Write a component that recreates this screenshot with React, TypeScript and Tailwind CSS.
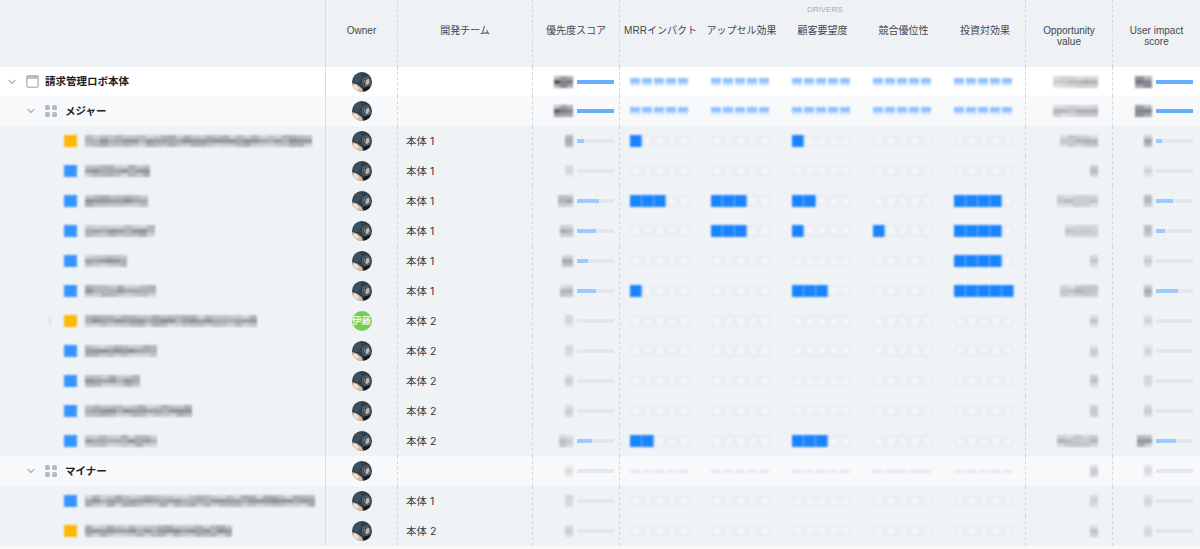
import React from "react";
import { ChevronDown } from "lucide-react";

const gridCols =
  "grid-cols-[325px_72px_135px_87px_81px_81px_81px_81px_82px_87px_88px]";
const font = "font-['Inter','Noto_Sans_CJK_JP',sans-serif]";
const headFont = "font-['Liberation_Sans','Noto_Sans_CJK_JP',sans-serif]";

function rnd(seed: number) {
  let s = seed * 9301 + 49297;
  return () => {
    s = (s * 9301 + 49297) % 233280;
    return s / 233280;
  };
}

function Mosaic({ w, seed, tone = 0.6 }: { w: number; seed: number; tone?: number }) {
  const r = rnd(seed);
  const cols = Math.max(1, Math.round(w / 7.5));
  const tiles: React.ReactNode[] = [];
  for (let c = 0; c < cols; c++) {
    tiles.push(
      <div key={c} className="flex flex-1 flex-col">
        {[0, 1, 2].map((i) => (
          <div
            key={i}
            className="h-[4px] bg-[#4a4f57]"
            style={{ opacity: (i === 1 ? 0.6 + r() * 0.4 : 0.3 + r() * 0.4) * tone }}
          />
        ))}
      </div>
    );
  }
  return (
    <div className="flex h-[12px] shrink-0 blur-[1px]" style={{ width: w }}>
      {tiles}
    </div>
  );
}

function Avatar() {
  return (
    <svg width="20" height="20" viewBox="0 0 20 20" className="block blur-[0.3px]">
      <defs>
        <clipPath id="av">
          <circle cx="10" cy="10" r="10" />
        </clipPath>
      </defs>
      <g clipPath="url(#av)">
        <rect width="20" height="20" fill="#2f404d" />
        <path d="M0 11l5 1.500 5 4 1 3.500H0z" fill="#dcbca2" />
        <path d="M1 13l3.500 0 2.500 3.500-3.500 2z" fill="#f2e2d3" />
        <path d="M10 6l6-2 3 5-1 5-5 2-3-4z" fill="#4e5a64" />
        <path d="M12 8l5-1 .5 4-2.500 2-3-1z" fill="#bfb8b1" />
        <path d="M13.500 7l-1 6" stroke="#2a353e" strokeWidth="1.2" />
        <path d="M11 16l7-2 2 6h-8z" fill="#141a20" />
        <path d="M2 3l6-2 2 4-4 6-4-1z" fill="#3d5060" />
      </g>
    </svg>
  );
}

function GreenAvatar() {
  return (
    <div className="flex h-[20px] w-[20px] items-center justify-center rounded-full bg-[#71cf53] text-[9.5px] font-medium leading-none text-white">
      伊藤
    </div>
  );
}

function WindowIcon() {
  return (
    <svg width="13" height="13" viewBox="0 0 13 13" className="block shrink-0">
      <rect x="0.8" y="0.8" width="11.4" height="11.4" rx="1.6" fill="none" stroke="#b3bbc6" strokeWidth="1.5" />
      <rect x="0.8" y="0.8" width="11.4" height="3" fill="#b3bbc6" />
    </svg>
  );
}

function GroupIcon() {
  return (
    <div className="grid h-[12px] w-[12px] shrink-0 grid-cols-2 gap-[1.5px]">
      <div className="rounded-[1.5px] bg-[#b3bbc6]" />
      <div className="rounded-[1.5px] bg-[#b3bbc6]" />
      <div className="rounded-[1.5px] bg-[#b3bbc6]" />
      <div className="rounded-[1.5px] bg-[#b3bbc6]" />
    </div>
  );
}

function Chevron() {
  return <ChevronDown size={12} strokeWidth={2.5} className="shrink-0 text-[#aeb6c0]" />;
}

function Dots({ filled, group, faint }: { filled: number; group?: boolean; faint?: boolean }) {
  if (group) {
    return (
      <div className="flex w-[60px] gap-[2px] blur-[0.8px]">
        {[0, 1, 2, 3, 4].map((i) => (
          <div
            key={i}
            className={
              faint
                ? "h-[3px] w-[10px] bg-[#e3e7ec]"
                : "h-[8px] w-[10px] border-b-[3px] border-[#d4e7ff] bg-[#8fc3ff]"
            }
          />
        ))}
      </div>
    );
  }
  return (
    <div className="flex w-[60px] blur-[0.9px]">
      {[0, 1, 2, 3, 4].map((i) =>
        i < filled ? (
          <div key={i} className="h-[12px] w-[12px] border-r border-[#6db0ff] bg-[#1a84ff]" />
        ) : (
          <div key={i} className="h-[12px] w-[12px] border-[3px] border-[#ebeef2] bg-[#f4f6f8]" />
        )
      )}
    </div>
  );
}

function Score({ pct, num, tone, seed, full }: { pct: number; num: number; tone: number; seed: number; full?: boolean }) {
  return (
    <div className="flex items-center justify-end gap-[4px]">
      <Mosaic w={num} seed={seed} tone={tone} />
      <div className="h-[4px] w-[37px] bg-[#e4e7ec] blur-[0.5px]">
        <div className={full ? "h-full bg-[#6aadff]" : "h-full bg-[#9ccaff]"} style={{ width: `${pct}%` }} />
      </div>
    </div>
  );
}

type Kind = "root" | "group" | "item";
type Row = {
  kind: Kind;
  label?: string;
  nameW?: number;
  color?: "y" | "b";
  team?: string;
  green?: boolean;
  score: [number, number, number];
  drivers?: number[];
  opp: [number, number];
  user: [number, number, number];
  faint?: boolean;
  dash?: boolean;
};

const none: [number, number, number] = [0, 8, 0.25];
const rows: Row[] = [
  { kind: "root", label: "請求管理ロボ本体", score: [100, 19, 1], opp: [45, 0.45], user: [100, 17, 1.1] },
  { kind: "group", label: "メジャー", score: [100, 19, 1], opp: [45, 0.45], user: [100, 17, 1.1] },
  { kind: "item", nameW: 227, color: "y", team: "本体 1", score: [20, 8, 0.55], drivers: [1, 0, 1, 0, 0], opp: [38, 0.4], user: [15, 8, 0.55] },
  { kind: "item", nameW: 65, color: "b", team: "本体 1", score: none, drivers: [0, 0, 0, 0, 0], opp: [8, 0.35], user: none },
  { kind: "item", nameW: 63, color: "b", team: "本体 1", score: [60, 15, 0.6], drivers: [3, 3, 2, 0, 4], opp: [41, 0.35], user: [45, 8, 0.5] },
  { kind: "item", nameW: 70, color: "b", team: "本体 1", score: [50, 13, 0.45], drivers: [0, 3, 1, 1, 4], opp: [33, 0.3], user: [25, 8, 0.5] },
  { kind: "item", nameW: 42, color: "b", team: "本体 1", score: [30, 11, 0.5], drivers: [0, 0, 0, 0, 4], opp: [8, 0.35], user: none },
  { kind: "item", nameW: 71, color: "b", team: "本体 1", score: [50, 13, 0.45], drivers: [1, 0, 3, 0, 5], opp: [38, 0.4], user: [60, 8, 0.5] },
  { kind: "item", nameW: 172, color: "y", team: "本体 2", green: true, dash: true, score: none, drivers: [0, 0, 0, 0, 0], opp: [8, 0.35], user: none },
  { kind: "item", nameW: 72, color: "b", team: "本体 2", score: none, drivers: [0, 0, 0, 0, 0], opp: [8, 0.35], user: none },
  { kind: "item", nameW: 55, color: "b", team: "本体 2", score: none, drivers: [0, 0, 0, 0, 0], opp: [8, 0.35], user: none },
  { kind: "item", nameW: 107, color: "b", team: "本体 2", score: none, drivers: [0, 0, 0, 0, 0], opp: [8, 0.35], user: none },
  { kind: "item", nameW: 72, color: "b", team: "本体 2", score: [40, 14, 0.4], drivers: [2, 0, 3, 0, 0], opp: [41, 0.4], user: [55, 15, 0.6] },
  { kind: "group", label: "マイナー", faint: true, score: none, opp: [8, 0.35], user: none },
  { kind: "item", nameW: 230, color: "b", team: "本体 1", score: none, drivers: [0, 0, 0, 0, 0], opp: [8, 0.35], user: none },
  { kind: "item", nameW: 147, color: "y", team: "本体 2", score: none, drivers: [0, 0, 0, 0, 0], opp: [8, 0.35], user: none },
];

const driverHeads = ["MRRインパクト", "アップセル効果", "顧客要望度", "競合優位性", "投資対効果"];

function DataRow({ row, index }: { row: Row; index: number }) {
  const bg =
    row.kind === "root"
      ? "bg-white"
      : row.kind === "group"
        ? "bg-[#f8f9fb]"
        : "bg-[#f0f3f6]";
  const h = row.kind === "root" ? "h-[29px]" : "h-[30px]";
  const drivers = row.drivers ?? [0, 0, 0, 0, 0];
  const isGroup = row.kind !== "item";
  return (
    <div className={`grid ${gridCols} ${h} ${bg} text-[10.5px] text-[#333a44]`}>
      <div className="flex min-w-0 items-center">
        {row.kind === "root" && (
          <div className="flex items-center pl-[6px]">
            <Chevron />
            <div className="ml-[8px]">
              <WindowIcon />
            </div>
            <span className="ml-[6px] pt-px font-bold text-[#1c2026]">{row.label}</span>
          </div>
        )}
        {row.kind === "group" && (
          <div className="flex items-center pl-[25px]">
            <Chevron />
            <div className="ml-[8px]">
              <GroupIcon />
            </div>
            <span className="ml-[8px] pt-px font-bold text-[#1c2026]">{row.label}</span>
          </div>
        )}
        {row.kind === "item" && (
          <div className="relative flex items-center pl-[64px]">
            {row.dash && <div className="absolute left-[49px] h-[10px] w-[2px] bg-[#dcdfe4] blur-[0.8px]" />}
            <div
              className={`h-[12px] w-[13px] shrink-0 blur-[1px] ${row.color === "y" ? "bg-[#ffb800]" : "bg-[#3595ff]"}`}
            />
            <div className="ml-[8px]">
              <Mosaic w={row.nameW ?? 60} seed={index * 13 + 5} />
            </div>
          </div>
        )}
      </div>
      <div className="flex items-center justify-center border-l border-[#d9dde2]">
        {row.green ? <GreenAvatar /> : <Avatar />}
      </div>
      <div className="flex items-center border-l border-dashed border-[#d3d8de] pl-[8px] pt-px">{row.team}</div>
      <div className="flex items-center justify-end border-l border-dashed border-[#d3d8de] pr-[5px]">
        <Score pct={row.score[0]} num={row.score[1]} tone={row.score[2]} seed={index + 3} full={row.score[0] === 100} />
      </div>
      {drivers.map((d, i) => (
        <div
          key={i}
          className={`flex items-center justify-center ${i === 0 ? "border-l border-dashed border-[#d3d8de]" : ""}`}
        >
          <Dots filled={d} group={isGroup} faint={row.faint} />
        </div>
      ))}
      <div className="flex items-center justify-end border-l border-dashed border-[#d3d8de] pr-[14px]">
        <Mosaic w={row.opp[0]} seed={index * 7 + 2} tone={row.opp[1]} />
      </div>
      <div className="flex items-center justify-end border-l border-dashed border-[#d3d8de] pr-[7px]">
        <Score pct={row.user[0]} num={row.user[1]} tone={row.user[2]} seed={index + 31} full={row.user[0] === 100} />
      </div>
    </div>
  );
}

export default function App() {
  return (
    <div className={`h-[549px] w-[1200px] overflow-hidden bg-[#f8f9fb] ${font}`}>
      <div className={`grid ${gridCols} h-[67px] bg-[#eff2f5] text-[10px] leading-[11px] text-[#41474f] ${headFont}`}>
        <div />
        <div className="flex justify-center border-l border-[#d9dde2] pt-[25px]">Owner</div>
        <div className="flex justify-center border-l border-dashed border-[#d3d8de] pt-[25px]">開発チーム</div>
        <div className="flex justify-center border-l border-dashed border-[#d3d8de] pt-[25px]">優先度スコア</div>
        <div className="relative col-span-5 grid grid-cols-[81px_81px_81px_81px_82px] border-l border-dashed border-[#d3d8de] pt-[25px]">
          <div className="absolute left-[187px] top-[6px] text-[8px] leading-[8px] text-[#a3abb5]">DRIVERS</div>
          {driverHeads.map((t) => (
            <div key={t} className="flex justify-center">
              {t}
            </div>
          ))}
        </div>
        <div className="border-l border-dashed border-[#d3d8de] pt-[25px] text-center">
          Opportunity
          <br />
          value
        </div>
        <div className="border-l border-dashed border-[#d3d8de] pt-[25px] text-center">
          User impact
          <br />
          score
        </div>
      </div>
      {rows.map((r, i) => (
        <DataRow key={i} row={r} index={i} />
      ))}
    </div>
  );
}
